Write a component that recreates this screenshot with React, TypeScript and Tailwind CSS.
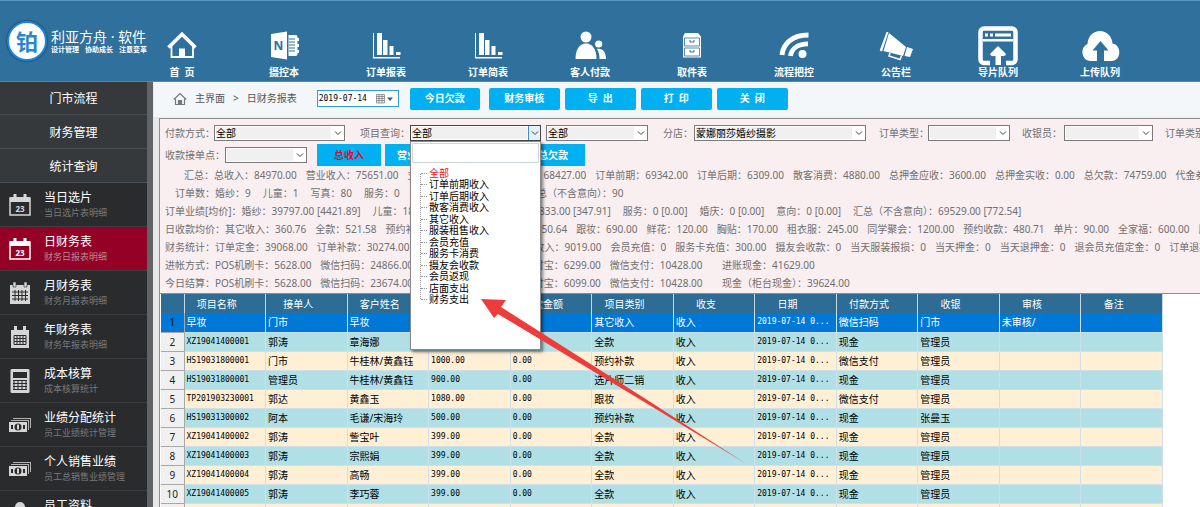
import React, { useState } from "react";
import clsx from "clsx";

type NavItem = {
  label: string;
  icon: React.ReactNode;
};

type MenuItem = {
  title: string;
  desc: string;
  icon: React.ReactNode;
};

type StatRow = {
  className: string;
  items: string[];
};

const barIcon = (
  <path d="M7 7h1v24h26v1.500H7zM11 7h5v22h-5zM17 14h4.500v15H17zM23.500 20h4v9h-4zM30 26h4.500v3H30z" />
);

const navItems: NavItem[] = [
  {
    label: "首  页",
    icon: (
      <>
        <path
          d="M6.500 21.500 20 8.300l13.500 13.200"
          fill="none"
          stroke="#fff"
          strokeWidth="3.600"
        />
        <path d="M9.500 20v11h21.500V20" fill="none" stroke="#fff" strokeWidth="1.800" />
        <path d="M17 22.500h6v8h-6z" />
      </>
    ),
  },
  {
    label: "摄控本",
    icon: (
      <>
        <path d="M7 8 23 5.500v28L7 31z" />
        <path d="M24.500 9h7a2 2 0 0 1 2 2v17a2 2 0 0 1-2 2h-7zM33 12h2v3h-2zM33 18h2v3h-2zM33 24h2v3h-2z" />
        <path
          d="M25 13h6M25 16h6M25 19h6M25 22h6M25 25h6"
          stroke="#2f709c"
          strokeWidth="1"
        />
        <text
          x="14.500"
          y="24"
          textAnchor="middle"
          fontSize="12"
          fontWeight="700"
          fill="#2f709c"
        >
          N
        </text>
      </>
    ),
  },
  { label: "订单报表", icon: barIcon },
  { label: "订单简表", icon: barIcon },
  {
    label: "客人付款",
    icon: (
      <>
        <circle cx="16" cy="11" r="5.500" />
        <path d="M5.500 33c0-9 3.500-15.500 10.500-15.500S26.500 24 26.500 33z" />
        <circle cx="28.700" cy="18" r="3.600" />
        <path d="M27 23c5.500-1 9 3 9 10h-6.500c0-4-.6-7-2.500-10z" />
      </>
    ),
  },
  {
    label: "取件表",
    icon: (
      <>
        <path d="M13 7h13l3 3.500v21H11v-21z" />
        <path
          d="M12.500 12h15v8h-15zM12.500 22h15v8h-15z"
          fill="none"
          stroke="#2f709c"
          strokeWidth=".8"
        />
        <path
          d="M18 14v2h4v-2M18 24v2h4v-2"
          fill="none"
          stroke="#2f709c"
          strokeWidth="1"
        />
      </>
    ),
  },
  {
    label: "流程把控",
    icon: (
      <>
        <path
          d="M8 29C9 18 18 9 34.500 9"
          fill="none"
          stroke="#fff"
          strokeWidth="5"
        />
        <path
          d="M16.500 30C17.500 22.500 24 17.800 34 17.800"
          fill="none"
          stroke="#fff"
          strokeWidth="4.800"
        />
        <circle cx="28.500" cy="28" r="4" />
      </>
    ),
  },
  {
    label: "公告栏",
    icon: (
      <>
        <path d="M10.500 6h2L6 25.500l-2.300-1z" />
        <path d="M13 7 30 21l-3 9L7.500 25z" />
        <path d="m31 21 6 2-3 8-5.500-1z" />
        <path
          d="m14 27-1 3 11 3.500 1.500-3.500"
          fill="none"
          stroke="#fff"
          strokeWidth="1.500"
        />
      </>
    ),
  },
  {
    label: "导片队列",
    icon: (
      <>
        <path
          d="M12 37H6a3.500 3.500 0 0 1-3.500-3.500V6A3.500 3.500 0 0 1 6 2.500h28A3.500 3.500 0 0 1 37.500 6v27.500A3.500 3.500 0 0 1 34 37h-6"
          fill="none"
          stroke="#fff"
          strokeWidth="4.500"
        />
        <path d="M5 13h30v2.500H5zM7 7.500h3v3H7zM12 7.500h3v3h-3zM17 7.500h16v3H17z" />
        <path d="m20 20 8 8c-1 3-3 2-5 2v9h-5.500v-9c-2 0-4.500 1-5.500-2z" />
      </>
    ),
  },
  {
    label: "上传队列",
    icon: (
      <>
        <path d="M10 35a9 9 0 0 1-2.500-17C8 10 13.500 5 20 5s12 5 12.500 12.500C42 19 41.500 35 31.500 35z" />
        <path d="m20.500 15 8 9.500h-4.500V35h-7V24.500h-4.500z" fill="#2f709c" />
      </>
    ),
  },
];

const dayIcon = (
  <>
    <path d="M2 5h20v17H2z" fill="none" stroke="currentColor" strokeWidth="1.500" />
    <path d="M2 4h20v5H2zM5.500 1h3v4h-3zM15.500 1h3v4h-3z" />
    <text x="12" y="19" textAnchor="middle" fontSize="8" fontWeight="700">
      23
    </text>
  </>
);

const moneyIcon = (
  <>
    <path d="M5 5h18v10h-1V6H5zM3 7h18v10h-1V8H3z" opacity=".8" />
    <path d="M1 9h18v10H1z" />
    <circle cx="10" cy="14" r="3.500" fill="#2a2b2d" />
    <path d="M3 12h2v4H3zM15 12h2v4h-2z" fill="#2a2b2d" />
    <path d="M9 11.500h2v5H9z" />
  </>
);

const menuItems: MenuItem[] = [
  { title: "当日选片", desc: "当日选片表明细", icon: dayIcon },
  { title: "日财务表", desc: "财务日报表明细", icon: dayIcon },
  {
    title: "月财务表",
    desc: "财务月报表明细",
    icon: (
      <>
        <path d="M2 4h20v19H2z" />
        <path d="M5 1h3v5H5zM16 1h3v5h-3z" stroke="#2a2b2d" strokeWidth=".6" />
        <path
          d="M4 11h16M4 14.500h16M4 18h16M7 9v11M10.500 9v11M14 9v11M17.500 9v11"
          stroke="#2a2b2d"
          strokeWidth="1"
        />
      </>
    ),
  },
  {
    title: "年财务表",
    desc: "财务年报表明细",
    icon: (
      <>
        <path d="M3 5h18v18H3zM6 1h3v5H6zM15 1h3v5h-3z" />
        <path
          d="M6 10.500h12v9H6zM6 13.500h12M6 16.500h12M9 10v10M12 10v10M15 10v10"
          fill="none"
          stroke="#2a2b2d"
          strokeWidth="1"
        />
      </>
    ),
  },
  {
    title: "成本核算",
    desc: "成本核算统计",
    icon: (
      <>
        <path d="M4 0h16a1.500 1.500 0 0 1 1.500 1.500v21A1.500 1.500 0 0 1 20 24H4a1.500 1.500 0 0 1-1.500-1.500v-21A1.500 1.500 0 0 1 4 0z" />
        <path d="M5 3h14v6H5z" fill="#2a2b2d" />
        <path
          d="M5 11.500h14M5 14.500h14M5 17.500h14M5 20.500h14M6 11v10M10 11v10M14 11v10M18 11v10"
          stroke="#2a2b2d"
          strokeWidth="1"
        />
      </>
    ),
  },
  { title: "业绩分配统计", desc: "员工业绩统计管理", icon: moneyIcon },
  { title: "个人销售业绩", desc: "员工总销售业绩管理", icon: moneyIcon },
  {
    title: "员工资料",
    desc: "员工资料管理",
    icon: (
      <>
        <circle cx="12" cy="6" r="5" />
        <path d="M3 24c0-8 4-12 9-12s9 4 9 12z" />
      </>
    ),
  },
];

const statRows: StatRow[] = [
  {
    className: "gap-[9px] pl-[19px]",
    items: [
      "汇总：总收入：84970.00",
      "营业收入：75651.00",
      "支出：7224.00",
      "营业净收入：68427.00",
      "订单前期：69342.00",
      "订单后期：6309.00",
      "散客消费：4880.00",
      "总押金应收：3600.00",
      "总押金实收：0.00",
      "总欠款：74759.00",
      "代金券：0.00",
    ],
  },
  {
    className: "gap-3 pl-2.5",
    items: [
      "订单数：婚纱：9",
      "儿童：1",
      "写真：80",
      "服务：0",
      "婚庆单：0",
      "意向单：0",
      "汇总（不含意向）：90",
    ],
  },
  {
    className: "gap-3",
    items: [
      "订单业绩[均价]：婚纱：39797.00 [4421.89]",
      "儿童：1899.00 [1899.00]",
      "写真：27833.00 [347.91]",
      "服务：0 [0.00]",
      "婚庆：0 [0.00]",
      "意向：0 [0.00]",
      "汇总（不含意向）：69529.00 [772.54]",
    ],
  },
  {
    className: "gap-[9px]",
    items: [
      "日收款均价：其它收入：360.76",
      "全款：521.58",
      "预约补款：582.33",
      "选片师二销：450.64",
      "跟妆：690.00",
      "鲜花：120.00",
      "胸贴：170.00",
      "租衣服：245.00",
      "同学聚会：1200.00",
      "预约收款：480.71",
      "单片：90.00",
      "全家福：600.00",
      "服装：0.00",
    ],
  },
  {
    className: "gap-[9px]",
    items: [
      "财务统计：订单定金：39068.00",
      "订单补款：30274.00",
      "支出：7224.00",
      "散客其它收入：9019.00",
      "会员充值：0",
      "服务卡充值：300.00",
      "摄友会收款：0",
      "当天服装报损：0",
      "当天押金：0",
      "当天退押金：0",
      "退会员充值定金：0",
      "订单退款：0",
    ],
  },
  {
    className: "gap-[9px]",
    items: [
      "进帐方式：POS机刷卡：5628.00",
      "微信扫码：24866.00",
      "银行转账：14408.00",
      "支付宝：6299.00",
      "微信支付：10428.00",
      "    进账现金：41629.00",
    ],
  },
  {
    className: "gap-[9px]",
    items: [
      "今日结算：POS机刷卡：5628.00",
      "微信扫码：23674.00",
      "银行转账：14408.00",
      "支付宝：6099.00",
      "微信支付：10428.00",
      "    现金（柜台现金）：39624.00",
    ],
  },
];

const projects = [
  "全部",
  "订单前期收入",
  "订单后期收入",
  "散客消费收入",
  "其它收入",
  "服装租售收入",
  "会员充值",
  "服务卡消费",
  "摄友会收款",
  "会员返现",
  "店面支出",
  "财务支出",
];

const columns = [
  "项目名称",
  "接单人",
  "客户姓名",
  "应收金额",
  "欠款金额",
  "项目类别",
  "收支",
  "日期",
  "付款方式",
  "收银",
  "审核",
  "备注",
];

const date = "2019-07-14 0...";

const records = [
  ["早妆", "门市", "早妆", "0.00", "", "其它收入", "收入", date, "微信扫码", "门市", "未审核/", ""],
  ["XZ19041400001", "郭涛", "章海娜", "399.00", "0.00", "全款", "收入", date, "现金", "管理员", "", ""],
  ["HS19031800001", "门市", "牛桂林/黄鑫钰", "1000.00", "0.00", "预约补款", "收入", date, "微信支付", "管理员", "", ""],
  ["HS19031800001", "管理员", "牛桂林/黄鑫钰", "900.00", "0.00", "选片师二销", "收入", date, "现金", "管理员", "", ""],
  ["TP201903230001", "郭达", "黄鑫玉", "1080.00", "0.00", "跟妆", "收入", date, "微信支付", "管理员", "", ""],
  ["HS19031300002", "阿本", "毛谦/宋海玲", "500.00", "0.00", "预约补款", "收入", date, "现金", "张曼玉", "", ""],
  ["XZ19041400002", "郭涛", "訾宝叶", "399.00", "0.00", "全款", "收入", date, "现金", "管理员", "", ""],
  ["XZ19041400003", "郭涛", "宗熙娟", "399.00", "0.00", "全款", "收入", date, "现金", "管理员", "", ""],
  ["XZ19041400004", "郭涛", "高畅", "399.00", "0.00", "全款", "收入", date, "现金", "管理员", "", ""],
  ["XZ19041400005", "郭涛", "李巧蓉", "399.00", "0.00", "全款", "收入", date, "现金", "管理员", "", ""],
  ["XZ19041400006", "郭涛", "高燕", "399.00", "0.00", "全款", "收入", date, "现金", "管理员", "", ""],
];

function Select({
  id,
  value,
  className,
  open,
}: {
  id: string;
  value?: string;
  className: string;
  open?: boolean;
}) {
  return (
    <div
      className={clsx(
        "flex h-4 shrink-0 items-stretch border bg-white",
        open ? "border-[#444]" : "border-[#7a7a7a]",
        className
      )}
    >
      <select
        id={id}
        className="min-w-0 flex-1 appearance-none border border-white bg-[#f0f0f0] text-[10px] leading-3 text-black outline-none"
      >
        <option>{value}</option>
      </select>
      <span
        className={clsx(
          "flex w-3 items-center justify-center",
          open && "border-l border-[#3b8fd0] bg-[#e3f1fb]"
        )}
      >
        <svg viewBox="0 0 8 8" className="h-2 w-2" fill="none" stroke="#444">
          <path d="m1 2.500 3 3 3-3" />
        </svg>
      </span>
    </div>
  );
}

function ProjectMenu() {
  return (
    <div className="absolute top-full left-0 z-10 flex h-[209px] w-[131px] flex-col border border-[#888] bg-white px-px pt-px shadow-[2px_2px_3px_rgba(0,0,0,0.5)]">
      <input
        aria-label="查找项目"
        className="h-5 w-full border border-[#cfd6da] bg-white px-1 text-[10px] outline-none"
      />
      <div className="mt-[5px] ml-2 flex">
        <div className="my-1.5 border-l border-dotted border-[#999]"></div>
        <ul className="flex h-[137px] flex-col justify-between text-[10px] leading-[11px] text-black">
          {projects.map((project, i) => (
            <li key={project} className="flex items-center gap-0.5">
              <span className="w-1.5 border-t border-dotted border-[#999]"></span>
              <span className={i === 0 ? "text-[#f01010]" : ""}>{project}</span>
            </li>
          ))}
        </ul>
      </div>
    </div>
  );
}

function Header() {
  return (
    <header className="flex h-[82px] shrink-0 border-t border-b border-t-[#559ac8] border-b-[#5787a8] bg-[#2f709c] text-white">
      <div className="flex w-[150px] shrink-0 items-center pl-[7px]">
        <div className="flex h-10 w-10 shrink-0 items-center justify-center rounded-full border-2 border-[#1b86dc] bg-white text-[22px] font-bold text-[#2b86cf] shadow-[0_0_2px_#123]">
          铂
        </div>
        <div className="ml-1 whitespace-nowrap">
          <div className="text-[14px] leading-4">利亚方舟 · 软件</div>
          <div className="flex gap-1.5 text-[7px] leading-[9px] font-bold">
            <span>设计管理</span>
            <span>协助成长</span>
            <span>注意变革</span>
          </div>
        </div>
      </div>
      <nav className="flex gap-[38px]">
        {navItems.map((item) => (
          <a
            key={item.label}
            href="#"
            className="flex w-16 flex-col items-center pt-[25px] whitespace-pre"
          >
            <svg viewBox="0 0 40 40" className="h-10 w-10" fill="#fff">
              {item.icon}
            </svg>
            <span className="text-[10px] leading-3 font-bold">{item.label}</span>
          </a>
        ))}
      </nav>
    </header>
  );
}

function Sidebar() {
  const [active, setActive] = useState("日财务表");

  return (
    <aside className="w-[153px] shrink-0 overflow-hidden border-r-[6px] border-[#606466] bg-[#2a2b2d]">
      {["门市流程", "财务管理", "统计查询"].map((group) => (
        <button
          key={group}
          type="button"
          className="block h-[33px] w-full border-b border-[#4c4f51] bg-[#36393b] pt-0.5 text-[12px] text-white not-first:h-[34px]"
        >
          {group}
        </button>
      ))}
      {menuItems.map((item) => (
        <button
          key={item.title}
          type="button"
          onClick={() => setActive(item.title)}
          className={clsx(
            "flex h-11 w-full items-center border-b border-[#3c3e40] pl-2 text-left whitespace-nowrap",
            active === item.title ? "bg-[#940026]" : "bg-[#2a2b2d]"
          )}
        >
          <svg
            viewBox="0 0 24 24"
            className={clsx(
              "h-6 w-6 shrink-0",
              active === item.title
                ? "fill-white text-white"
                : "fill-[#d6d6d6] text-[#d6d6d6]"
            )}
          >
            {item.icon}
          </svg>
          <span className="ml-3">
            <span className="block text-[12px] leading-4 text-white">
              {item.title}
            </span>
            <span
              className={clsx(
                "block text-[9px] leading-[14px]",
                active === item.title ? "text-[#b58a95]" : "text-[#78797a]"
              )}
            >
              {item.desc}
            </span>
          </span>
        </button>
      ))}
    </aside>
  );
}

function Toolbar() {
  return (
    <div className="flex h-[35px] items-center bg-[#f4f7f9] pb-0.5 pl-[19px] text-[10px] text-[#555]">
      <svg
        viewBox="0 0 14 14"
        className="h-3.5 w-3.5"
        fill="none"
        stroke="#777"
        strokeWidth="1.200"
      >
        <path d="M.8 7.500 7 1.500l6.200 6M2.500 7v5.500h9V7" />
        <path d="M5.500 8.500h3v4h-3z" fill="#777" />
      </svg>
      <a href="#" className="ml-2">
        主界面
      </a>
      <span className="mx-2">&gt;</span>
      <span>日财务报表</span>
      <div className="ml-5 flex h-[17px] w-[82px] items-center border border-[#2f9fdc] bg-white">
        <input
          aria-label="日期"
          defaultValue="2019-07-14"
          className="w-[58px] pl-px font-['DejaVu_Sans_Mono'] text-[8px] text-black outline-none"
        />
        <svg viewBox="0 0 18 10" className="h-2.5 w-[18px]">
          <path
            d="M.5.500h8v8.500h-8zM.5 2.500h8M.5 4.500h8M.5 6.500h8M3 .5V9M6 .5V9"
            fill="#eee"
            stroke="#666"
            strokeWidth=".6"
          />
          <path d="M11 3.500h6l-3 3.500z" fill="#3b5c7a" />
        </svg>
      </div>
      <div className="ml-[11px] flex gap-[5px] font-bold text-white">
        <button
          type="button"
          className="mr-1 h-[22px] w-[70px] rounded-xs bg-[#00b0f0]"
        >
          今日欠款
        </button>
        {["财务审核", "导  出", "打  印", "关  闭"].map((label) => (
          <button
            key={label}
            type="button"
            className="h-[22px] w-[71px] rounded-xs bg-[#00b0f0] whitespace-pre"
          >
            {label}
          </button>
        ))}
      </div>
    </div>
  );
}

function Filters() {
  return (
    <div className="border-t border-l border-[#8d8d8d] bg-[#f9eef0] pt-[5px] pb-px pl-[5px] whitespace-nowrap text-[#707070]">
      <div className="flex h-[18px] items-center">
        <label htmlFor="payway" className="w-[49px] shrink-0">付款方式：</label>
        <Select id="payway" value="全部" className="w-[131px]" />
        <label htmlFor="project" className="ml-[15px] w-[50px] shrink-0">项目查询：</label>
        <div className="relative shrink-0">
          <Select id="project" value="全部" className="w-[131px]" open />
          <ProjectMenu />
        </div>
        <label htmlFor="scope" className="sr-only">范围</label>
        <Select id="scope" value="全部" className="ml-[5px] w-[102px]" />
        <label htmlFor="store" className="ml-[15px] w-[31px] shrink-0">分店：</label>
        <Select id="store" value="蒙娜丽莎婚纱摄影" className="w-[172px]" />
        <label htmlFor="kind" className="ml-[13px] w-[49px] shrink-0">订单类型：</label>
        <Select id="kind" className="w-[82px]" />
        <label htmlFor="cashier" className="ml-3 w-[42px] shrink-0">收银员：</label>
        <Select id="cashier" className="w-[89px]" />
        <span className="ml-3 shrink-0">订单类别：</span>
      </div>
      <div className="mt-[2px] flex h-[22px] items-center">
        <label htmlFor="point" className="w-[60px] shrink-0">收款接单点：</label>
        <Select id="point" className="w-[82px]" />
        <div className="ml-[10px] flex gap-1">
          {["总收入", "营业收入", "总支出", "总欠款"].map((label, i) => (
            <button
              key={label}
              type="button"
              className={clsx(
                "h-[22px] w-16 bg-[#00b0f0] font-bold",
                i === 0 ? "text-[#d4103a]" : "text-white"
              )}
            >
              {label}
            </button>
          ))}
        </div>
      </div>
      {statRows.map((row) => (
        <div
          key={row.items[0]}
          className={clsx("flex h-[18px] items-center", row.className)}
        >
          {row.items.map((item) => (
            <span key={item} className="shrink-0 whitespace-pre">
              {item}
            </span>
          ))}
        </div>
      ))}
    </div>
  );
}

function ReportTable() {
  return (
    <div className="border-t border-l border-[#8d8d8d] bg-white pr-[37px] pl-px">
      <table className="w-full table-fixed border-collapse text-[10px] leading-3 whitespace-nowrap">
        <thead>
          <tr className="h-[19px] bg-[#2c6c95] text-white">
            <th className="w-[23px] border-r border-[#c8d8e0]"></th>
            {columns.map((column) => (
              <th
                key={column}
                className="border-r border-[#c8d8e0] pr-4 text-center font-normal"
              >
                {column}
              </th>
            ))}
          </tr>
        </thead>
        <tbody>
          {records.map((record, i) => (
            <tr
              key={i}
              className={clsx(
                "h-[19px]",
                i === 0 && "bg-[#0078d7] text-white",
                i > 0 && i % 2 === 1 && "bg-[#b0e0e6] text-black",
                i > 0 && i % 2 === 0 && "bg-[#ffefd5] text-black"
              )}
            >
              <th
                scope="row"
                className={clsx(
                  "border-r border-b border-[#a8a8a8] text-center font-normal",
                  i === 0 ? "bg-[#0078d7] text-black" : "bg-[#f0f0f0] text-[#222]"
                )}
              >
                {i + 1}
              </th>
              {record.map((cell, j) => (
                <td
                  key={j}
                  className={clsx(
                    "overflow-hidden border-r border-b border-[#cfe0ea] pl-0.5",
                    /^[\x00-\x7f]*$/.test(cell) &&
                      "font-['DejaVu_Sans_Mono'] text-[8px]"
                  )}
                >
                  {cell}
                </td>
              ))}
            </tr>
          ))}
        </tbody>
      </table>
    </div>
  );
}

function App() {
  return (
    <div className="flex h-screen flex-col overflow-hidden bg-white font-['Noto_Sans','Noto_Sans_CJK_SC',sans-serif] text-[10px]">
      <Header />
      <div className="flex min-h-0 flex-1">
        <Sidebar />
        <main className="relative min-w-0 flex-1 overflow-hidden border-l border-[#e8e8e8] bg-[#e8e8e8]">
          <Toolbar />
          <div className="mt-px ml-[5px]">
            <Filters />
            <ReportTable />
          </div>
          <svg
            viewBox="0 0 266 166"
            className="pointer-events-none absolute top-[217px] left-[327px] z-20 h-[166px] w-[266px]"
            fill="#ee3b3b"
          >
            <path d="M0 0 25 1 20 8 160 97 264 164 160 101 17 15 13 19z" />
          </svg>
        </main>
      </div>
    </div>
  );
}

export default App;
